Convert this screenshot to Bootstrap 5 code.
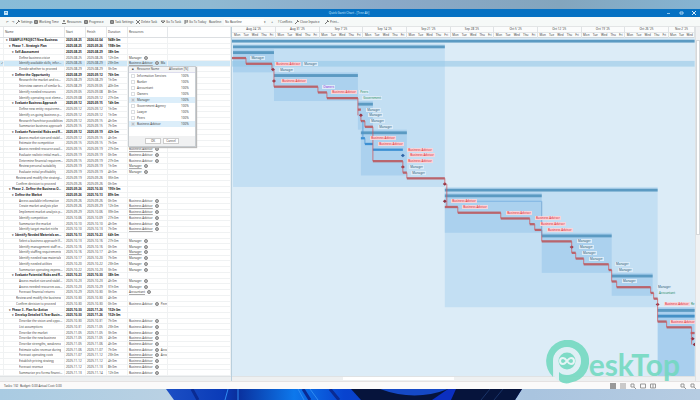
<!DOCTYPE html>
<html lang="en">
<head>
<meta charset="utf-8">
<meta name="viewport" content="width=device-width, initial-scale=1">
<title>Quick Gantt Chart - [Tree Alt]</title>
<link href="https://cdn.jsdelivr.net/npm/bootstrap@5.3.0/dist/css/bootstrap.min.css" rel="stylesheet">
<style>
:root{--line:#e4e7ea}
body{font:3px/4px "Noto Sans","Open Sans",sans-serif;color:#444;background:#a9c6dc;overflow:hidden}
button,select,input{font:inherit;color:inherit}
.plain{border:0;background:none;padding:0;white-space:nowrap}
.sky{height:9px;background:linear-gradient(90deg,#88bcd8 0,#8fb9d2 30%,#8ba9c8 55%,#83a5bd 80%,#86b4d2)}
.titlebar{height:8px;background:#0671c2;color:#c9e6fb}
.toolrow{height:10px;background:#f6f9f8;border-bottom:1px solid #e3e5e6}
.toolrow svg{width:4px;height:4px;margin-right:1px}
.toolrow select{border:0;background:#fdfefe;width:40px;height:6px;padding:0 1px;appearance:none}
.workarea{min-height:0;background:#fff}
.sheet{flex:0 0 33.2%;border-right:1px solid #b9cfdd}
.sheet table{min-height:0}
.sheet tr{display:grid;grid-template-columns:4px 61px 21px 21px 21px 40px minmax(0,1fr);min-height:0}
.sheet thead{height:11px;flex:none}
.sheet thead tr{height:11px;align-items:stretch;border-bottom:1px solid #dcdfe2}
.sheet th,.sheet td{padding:0 1px;white-space:nowrap;font-weight:400;border-right:1px solid var(--line);display:flex;align-items:center;min-width:0}
.sheet tbody{display:grid;grid-auto-rows:minmax(0,1fr);min-height:0}
.sheet tbody tr{border-bottom:1px solid #f0f2f3}
.sheet td{border-right-color:#f0f2f3}
.sheet td span.name{overflow:hidden;text-overflow:ellipsis}
.sheet .sum td{font-weight:700;color:#222}
.sheet tr.picked td{background:#cfe8f7}
.sheet .lv0{padding-left:2px}.sheet .lv1{padding-left:5px}.sheet .lv2{padding-left:8px}
.sheet .leaf2{padding-left:12px}.sheet .leaf3{padding-left:15px}
.tri{width:3px;flex:none}
.res{overflow:hidden;gap:2px}
.res u{text-decoration-color:#aaa;text-decoration-thickness:1px}
.dot{width:4px;height:4px;flex:none;border:1px solid #888;border-radius:50%;background:#bbb}
.sheet .hostcell{position:relative;overflow:visible}
.picker{position:absolute;left:0;top:100%;width:68px;height:81px;z-index:3;background:#fff;border:1px solid #c8cdd1;box-shadow:1px 1px 1px #bbb}
.opt{display:grid;grid-template-columns:8px 1fr 14px;align-items:center;height:6px;flex:none}
.opt.on{background:#dceefa}
.opt.hd{grid-template-columns:8px 32px 1fr;background:#f3f4f5;border-bottom:1px solid #dde}
.opt input{appearance:none;width:4px;height:4px;margin:0 2px;border:1px solid #dcdfe2;background:#fff}
.opt input:checked{background:#b8c4ce}
.pfoot{background:#f0f1f2;height:10px;gap:2px}
.pfoot button{width:16px;height:6px;border:1px solid #ccc;background:#fff;padding:0}
.scale{height:11px;flex:none;border-bottom:1px solid #cfd8de;background:#fbfcfc}
.weeks{display:grid;grid-template-columns:repeat(10,5fr) 3fr}
.week{border-right:1px solid #dfe3e5;text-align:center;min-width:0;line-height:5px}
.days{display:flex;justify-content:space-around;border-top:1px solid #e3e6e8}
.plot{position:relative;min-height:0;overflow:hidden;background:#dcecf7}
.plot svg{position:absolute;width:100%;height:100%}
.tag{position:absolute;white-space:nowrap;padding:0 1px;transform:translateY(-50%);background:#dcebf7;color:#2f5c78}
.tag.ba{color:#e0222c;background:#f6d5da}
.tag.green{color:#238a5c}.tag.violet{color:#9030d8}
.vbar{width:5px;background:#f1f2f3;border-left:1px solid #dfe2e4}
.vbar div{background:#fff;border:1px solid #d5d8da;height:55%;margin-top:13px}
.hbar{height:5px;background:#eef0f1;border-top:1px solid #dfe2e4}
.hbar div{height:3px;background:#fff;width:24%;margin-left:24%}
.statusrow{height:8px;background:#fbfafa;border-top:1px solid #e5e2e2}
.statusrow svg{width:6px;height:6px}
.wall{height:11px;flex:none;display:block;width:100%}
.logo{position:absolute;right:20px;bottom:16px;color:#72d9c0;opacity:.88;z-index:5}
.logo svg{width:44px;height:44px}
.logo span{font:700 30px/36px Lato,sans-serif;padding-top:3px}
</style>
</head>
<body class="vh-100 d-flex flex-column">
<div class="sky flex-shrink-0"></div>
<header class="titlebar flex-shrink-0 d-flex align-items-center px-1">
  <svg width="4" height="4" viewBox="0 0 4 4"><path fill="#c3e4f8" d="M0 0h4v4H0z"/><path fill="#5fabdf" d="M1 1h2v1H1z"/></svg>
  <div class="flex-fill text-center ps-4">Quick Gantt Chart - [Tree Alt]</div>
  <div class="d-flex gap-2">
    <button class="plain d-flex" aria-label="Minimize"><svg width="5" height="4"><path stroke="#8fc4ea" d="M1 2.500h3"/></svg></button>
    <button class="plain d-flex" aria-label="Restore"><svg width="5" height="4"><path fill="none" stroke="#a9d3f1" d="M1 1h3v2H1z"/></svg></button>
    <button class="plain d-flex" aria-label="Close"><svg width="4" height="4"><path stroke="#d5ebfa" d="M0 0l4 4M4 0L0 4"/></svg></button>
  </div>
</header>
<nav class="toolrow flex-shrink-0 d-flex align-items-center ps-1" id="tools" aria-label="Tools"></nav>

<main class="workarea flex-fill d-flex">
  <section class="sheet d-flex flex-column">
    <table class="d-flex flex-column flex-fill w-100">
      <thead><tr><th></th><th>Name</th><th>Start</th><th>Finish</th><th>Duration</th><th>Resources</th><th></th></tr></thead>
      <tbody class="flex-fill" id="rows"></tbody>
    </table>
    <div class="hbar"></div>
  </section>
  <section class="flex-fill d-flex flex-column overflow-hidden">
    <div class="scale weeks" id="weeks"></div>
    <div class="plot flex-fill" id="plot"></div>
    <div class="hbar"><div></div></div>
  </section>
  <div class="vbar"><div></div></div>
</main>

<footer class="statusrow flex-shrink-0 d-flex align-items-center justify-content-between px-1">
  <span>Tasks: 132&nbsp; Budget: 0.00 Actual Cost: 0.00</span>
  <span class="d-flex gap-1 align-items-center" id="views"></span>
</footer>
<svg class="wall" viewBox="0 0 700 11" preserveAspectRatio="none" aria-hidden="true">
  <defs>
    <linearGradient id="sky"><stop offset="0" stop-color="#a9cbe2"/><stop offset=".24" stop-color="#b9d1e3"/><stop offset=".76" stop-color="#a9c4df"/><stop offset="1" stop-color="#b6cce2"/></linearGradient>
    <linearGradient id="bloom"><stop offset="0" stop-color="#1c4fc4"/><stop offset=".16" stop-color="#0a3bb8"/><stop offset=".2" stop-color="#0a2f9c"/><stop offset=".36" stop-color="#0d78ec"/><stop offset=".5" stop-color="#0843cf"/><stop offset="1" stop-color="#0a2bb0"/></linearGradient>
  </defs>
  <path fill="url(#sky)" d="M0 0h700v11H0z"/>
  <path fill="url(#bloom)" d="M166 0h356l-7 11H174z"/>
  <path fill="#06143c" d="M351 0h171l-7 11H361z"/>
  <path fill="#1549c6" d="M380 0h68Q415 13 380 0z"/>
  <path fill="#0b2fc0" d="M432 11L448 0h8l-5 11z"/>
  <path fill="none" stroke="#2f8bf2" d="M228 0l-3 11M238 0v11M298 0l6 11M310 0l8 11"/>
  <path fill="none" stroke="#0a2b93" stroke-width="3" d="M192 0l6 11M303 0l7 11M330 0l9 11"/>
  <path fill="none" stroke="#1a3468" d="M490 0l-9 11M503 0l-9 11"/>
</svg>
<div class="logo d-flex align-items-center">
  <svg viewBox="0 0 44 44" aria-hidden="true"><path fill="currentColor" fill-rule="evenodd" d="M8 37A21.500 21.500 0 1 1 26 42.500C20 45 15 42 14 40V22a8.500 8.500 0 1 1 9 8.500v4A13.500 13.500 0 1 0 8.500 21z"/><path fill="#dff0f5" d="M8 21a14 14 0 1 1 14 14c-4 0-6-1-8-3v9C9 39 8 33 8 21z"/><circle cx="22" cy="21" r="8.500" fill="currentColor"/><path fill="none" stroke="#e8f6f6" stroke-width="2" d="M22 21c-2-3-3-3-4-3a3 3 0 0 0 0 6c2 0 3-2 4-3s2-3 4-3a3 3 0 0 1 0 6c-1 0-2 0-4-3z"/></svg>
  <span>eskTop</span>
</div>

<script>
const B='Business Advisor',M='Manager';
// kind, name, start, finish, duration, resources, bar start, bar end, bar type, label, label x
const T=[
['0','EXAMPLE PROJECT:New Business','08-25','02-04','948h 0m','',0,463,'s'],
['1','Phase 1 - Strategic Plan','08-25','09-26','198h 0m','',1,213,'s'],
['2','Self-Assessment','08-25','08-29','38h 0m','',1,42,'s'],
['l','Define business vision','08-25','08-26','12h 0m',M,0,14,'r',M,18],
['l','Identify available skills, information','08-26','08-29','23h 0m',B,14,40,'r',B,43],
['l','Decide whether to proceed','08-29','08-29','3h 0m','',40,42,'m',M,47],
['2','Define the Opportunity','08-29','09-12','76h 0m','',42,126,'s'],
['l','Research the market and competition','08-29','08-29','1h 0m','',41,43,'m',B,49],
['l','Interview owners of similar business','08-29','09-05','40h 0m','',42,86,'r','Owners',90],
['l','Identify needed resources','09-05','09-08','8h 0m','',86,95,'r',B,99],
['l','Identify operating cost elements','09-08','09-12','27h 0m','',95,126,'r','Government',130],
['2','Evaluate Business Approach','09-12','09-15','14h 0m','',126,141,'s'],
['l','Define new entity requirements','09-12','09-12','1h 0m','',126,129,'r',M,134],
['l','Identify on-going business purchase','09-12','09-12','1h 0m','',128,130,'m',M,136],
['l','Research franchise possibilities','09-12','09-15','4h 0m','',129,133,'r',M,138],
['l','Summarize business approach','09-15','09-15','7h 0m','',133,141,'r',M,146],
['2','Evaluate Potential Risks and Rewards','09-12','09-19','42h 0m','',129,175,'s'],
['l','Assess market size and stability','09-12','09-15','4h 0m','',129,133,'b',B,138],
['l','Estimate the competition','09-15','09-15','7h 0m','',133,141,'b',B,146],
['l','Assess needed resource availability','09-15','09-19','27h 0m',B,141,171,'b',B,175],
['l','Evaluate realistic initial market share','09-19','09-19','0h 0m',B,170,172,'m',B,177],
['l','Determine financial requirements','09-15','09-19','27h 0m',B,141,171,'r',B,175],
['l','Review personal suitability','09-19','09-19','1h 0m',M,170,172,'m',M,177],
['l','Evaluate initial profitability','09-19','09-19','4h 0m',M,171,175,'r',M,179],
['k','Review and modify the strategic plan','09-19','09-26','35h 0m','',175,213,'r'],
['k','Confirm decision to proceed','09-26','09-26','0h 0m','',212,214,'m'],
['1','Phase 2 - Define the Business Opportunity','09-26','10-30','195h 0m','',213,426,'s'],
['2','Define the Market','09-26','10-13','89h 0m','',213,310,'s'],
['l','Access available information','09-26','09-26','0h 0m',B,212,214,'m',B,219],
['l','Create market analysis plan','09-26','09-29','12h 0m',B,213,226,'r',B,230],
['l','Implement market analysis plan','09-29','10-06','39h 0m',B,226,269,'r',B,274],
['l','Identify competition','10-06','10-09','27h 0m',B,269,298,'r',B,303],
['l','Summarize the market','10-10','10-10','4h 0m',B,298,303,'r',B,308],
['l','Identify target market niche','10-10','10-13','7h 0m',B,303,310,'r',B,315],
['2','Identify Needed Materials and Supplies','10-13','10-23','64h 0m','',310,380,'s'],
['l','Select a business approach (from)','10-13','10-16','27h 0m',M,310,340,'r',M,345],
['l','Identify management staff resources','10-16','10-16','0h 0m',M,339,341,'m',M,347],
['l','Identify staffing requirements','10-16','10-17','4h 0m',M,340,344,'r',M,350],
['l','Identify needed raw materials','10-17','10-20','7h 0m',M,344,352,'r',M,357],
['l','Identify needed utilities','10-20','10-22','23h 0m',M,352,377,'r',M,383],
['l','Summarize operating expenses','10-22','10-23','3h 0m',M,377,380,'r',M,386],
['2','Evaluate Potential Risks and Rewards','10-23','10-30','38h 0m','',380,421,'s'],
['l','Assess market size and stability','10-23','10-23','4h 0m',M,380,385,'r',M,390],
['l','Assess needed resources availability','10-23','10-29','31h 0m',M,385,419,'r',M,425],
['l','Forecast financial returns','10-29','10-30','3h 0m','Accountant',419,422,'r','Accountant',426],
['k','Review and modify the business','10-30','10-30','4h 0m','',422,426,'r'],
['k','Confirm decision to proceed','10-30','10-30','0h 0m',B,425,427,'m',B,432],
['1','Phase 3 - Plan for Action','10-30','11-26','152h 0m','',426,463,'s'],
['2','Develop Detailed 5-Year Business','10-30','11-26','152h 0m','',426,463,'s'],
['l','Describe the vision and opportunity','10-30','10-31','7h 0m',B,426,435,'r',B,438],
['l','List assumptions','10-31','11-05','23h 0m',B,435,460,'r'],
['l','Describe the market','11-05','11-05','3h 0m',B,459,463,'r'],
['l','Describe the new business','11-05','11-05','4h 0m',B,460,463,'m'],
['l','Describe strengths, weakness','11-05','11-06','4h 0m',B,462,463,'m'],
['l','Estimate sales revenue during','11-06','11-07','7h 0m',B],
['l','Forecast operating costs','11-07','11-12','23h 0m',B],
['l','Establish pricing strategy','11-12','11-12','4h 0m',B],
['l','Forecast revenue','11-12','11-13','8h 0m',B],
['l','Summarize pro forma financials','11-13','11-14','12h 0m',B]];
const extra={4:'Ma',46:'Peers',54:'Acco',55:'Acco'};
const cls={0:'lv0',1:'lv1',2:'lv2',k:'leaf2',l:'leaf3'};
const picker=()=>{
  const o=['Information Services','Banker','Accountant','Owners','Manager','Government Agency','Lawyer','Peers','Business Advisor'];
  return `<div class="picker d-flex flex-column"><div class="opt hd"><b class="text-center">■</b><span>Resource Name</span><span>Allocation [%]</span></div>`+
  o.map((n,i)=>{const c=i==4||i==8;return `<label class="opt ${c?'on':''}"><input type="checkbox" ${c?'checked':''}><span>${n}</span><span>100%</span></label>`}).join('')+
  `<div class="flex-fill"></div><div class="pfoot d-flex justify-content-center align-items-center"><button>OK</button><button>Cancel</button></div></div>`};
document.getElementById('rows').innerHTML=T.map((t,i)=>{
  const s='012'.includes(t[0]);
  const r=t[5]?`<u>${t[5]}</u><i class="dot"></i>`+(extra[i]?`<span>${extra[i]}</span>`:''):'';
  return `<tr class="${s?'sum':''} ${i==4?'picked':''}"><td>${i==4?'✓':''}</td><td class="${cls[t[0]]}">${s?'<span class="tri">▾</span>':''}<span class="name">${t[1]}</span></td><td>2025-${t[2]}</td><td>${i?2025:2026}-${t[3]}</td><td>${t[4]}</td><td class="res ${i==4?'hostcell':''}">${r}${i==4?picker():''}</td><td></td></tr>`}).join('');

const wk=['Aug 24 \'25','Aug 31 \'25','Sep 7 \'25','Sep 14 \'25','Sep 21 \'25','Sep 28 \'25','Oct 5 \'25','Oct 12 \'25','Oct 19 \'25','Oct 26 \'25','Nov 2 \'25'];
document.getElementById('weeks').innerHTML=wk.map((w,i)=>`<div class="week">${w}<div class="days">${['Mon','Tue','Wed','Thu','Fri'].slice(0,i==10?3:5).map(d=>`<span>${d}</span>`).join('')}</div></div>`).join('');

// Chart: 463 units wide, ten units of height to a row
const N=T.length,box=(a,b,x,y,f)=>`<rect x="${x}" y="${a*10}" width="${y-x}" height="${(b-a+1)*10}" fill="${f}"/>`;
let g=box(1,25,1,213,'#c3dff3')+box(26,46,213,426,'#c3dff3')+box(47,58,426,463,'#a9cfee')+
 [[2,5,1,42],[6,10,42,126],[11,15,126,141],[16,23,129,175],[27,33,213,310],[34,40,310,380],[41,44,380,421]].map(a=>box(a[0],a[1],a[2],a[3],'#abd1ee')).join('')+
 `<rect x="0" y="40" width="463" height="10" fill="#8fc4e6" opacity=".55"/>`;
const link=(x,a,b,c)=>`<path d="M${x} ${a*10+5}V${b*10+5}" stroke="${c}" fill="none" vector-effect="non-scaling-stroke" opacity=".75"/>`;
T.forEach((t,i)=>{
  if(t[6]===undefined)return;
  const y=i*10,[a,b,k]=[t[6],t[7],t[8]];
  if(k=='s')g+=`<rect x="${a}" y="${y+3}" width="${b-a}" height="5" fill="${i==48?'#4590c6':'#5b9ac2'}"/>`;
  if(k=='r')g+=`<rect x="${a}" y="${y+3}" width="${b-a}" height="4" fill="#b9646c"/>`;
  if(k=='b')g+=`<rect x="${a}" y="${y+3}" width="${b-a}" height="4" fill="#3c8fd2"/>`;
  if(k=='m')g+=`<path d="M${a-1} ${y+5}l2-3 2 3-2 3z" fill="${i==20?'#2b62a5':'#8e3445'}"/>`;
});
[[14,3,4],[40,4,5],[42,5,8],[86,8,9],[95,9,10],[126,10,13],[129,13,14],[133,14,15],[141,15,21],[171,21,23],[175,23,24],[213,24,25],[215,25,29],[226,29,30],[269,30,31],[298,31,32],[303,32,33],[310,33,35],[340,35,37],[344,37,38],[352,38,39],[377,39,40],[380,40,42],[385,42,43],[419,43,44],[422,44,45],[426,45,49],[435,49,50],[460,50,53]].forEach(a=>g+=link(a[0],a[1],a[2],'#d0565c'));
g+=link(131,14,17,'#4c97d6')+link(133,17,18,'#4c97d6')+link(310,28,34,'#6b9fce')+`<path d="M240 285H310" stroke="#7fb5e2" vector-effect="non-scaling-stroke"/>`;
const tag=(i,x,t,c)=>`<span class="tag ${c}" style="left:${(x/463*100).toFixed(2)}%;top:${((i+.5)/N*100).toFixed(2)}%">${t}</span>`;
const color={[B]:'ba',Owners:'violet',Government:'green',Accountant:'green'};
let h=T.map((t,i)=>t[9]?tag(i,t[10],t[9],color[t[9]]||''):'').join('')+tag(4,71,M,'')+tag(9,127,'Peers','green')+tag(46,458,'Re','green');
document.getElementById('plot').innerHTML=`<svg viewBox="0 0 463 ${N*10}" preserveAspectRatio="none" aria-hidden="true">${g}</svg>${h}`;

const ic={pen:'M0 4L3 1M2 0l2 2',grid:'M.5.500h3v3h-3zM2 0v4M0 2h4',man:'M1 1h2M2 0v2M0 3.500h4',del:'M0 0l4 4M4 0L0 4',go:'M0 1h4L2 3z',flag:'M1 4V0h3v2H1'};
const btn=(x,n,w)=>`<button class="plain d-flex align-items-center" style="width:${w}px"><svg viewBox="0 0 4 4"><path d="${ic[x]}" fill="none" stroke="#777"/></svg>${n}</button>`;
document.getElementById('tools').innerHTML=
 `<button class="plain" style="width:6px" aria-label="Undo">↶</button><button class="plain" style="width:6px" aria-label="Redo">↷</button>`+
 btn('pen','Settings',18)+btn('grid','Working Time',28)+btn('man','Resources',22)+btn('grid','Progress ▾',26)+btn('grid','Task Settings',26)+btn('del','Delete Task',25)+btn('go','Go To Task',23)+btn('flag','Go To Today',25)+
 `<label for="base" style="width:15px">Baseline:</label><select id="base"><option>No Baseline</option></select><span style="width:5px">▾</span><button class="plain" style="width:6px">+</button><button class="plain" style="width:20px">? Conflicts</button>`+btn('pen','Close Inputs ▾',30)+btn('pen','Print...',20);
document.getElementById('views').innerHTML=['M0 0h6v6H0z','M0 1h6M0 3h6M0 5h6','M1 1h3v3H1zM4 4l2 2','M.5 1h5v4h-5z','M.5 1h5v4h-5zM3 1v4','','M1 1h3v3H1zM4 4l2 2','M1 1h3v3H1zM4 4l2 2'].map((d,i)=>d?`<button class="plain d-flex" aria-label="View ${i+1}"><svg viewBox="0 0 6 6"><path d="${d}" stroke="#999" fill="${i?'none':'#999'}"/></svg></button>`:'<span class="px-2"></span>').join('');
</script>
<script src="https://cdn.jsdelivr.net/npm/bootstrap@5.3.0/dist/js/bootstrap.bundle.min.js"></script>
</body>
</html>
